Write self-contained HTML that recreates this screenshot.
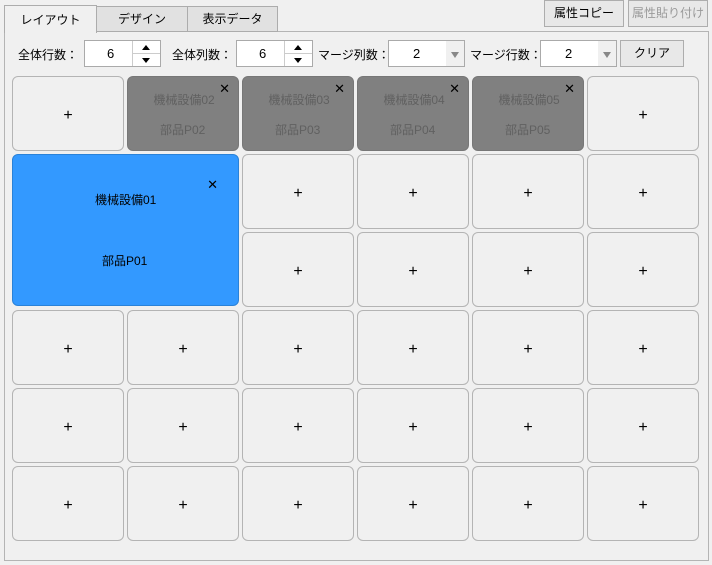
<!DOCTYPE html><html><head><meta charset="utf-8"><style>
*{box-sizing:border-box}
body{margin:0;width:712px;height:565px;background:#f0f0f0;font-family:"Liberation Sans","Noto Sans CJK JP",sans-serif;font-size:12px;color:#000;position:relative;overflow:hidden}
.a{position:absolute}
.tab{position:absolute;border:1px solid #acacac;background:#e1e1e1;text-align:center;line-height:24px}
.btn{position:absolute;border:1px solid #adadad;background:#e8e8e8;text-align:center;line-height:25px}
.cell{position:absolute;width:112px;height:75px;border:1px solid #b4b4b4;border-radius:6px;background:#f0f0f0;text-align:center;line-height:77px;font-size:16px;overflow:hidden}
.g{background:#808080;border-color:#777;color:#606060;font-size:12px;line-height:normal}
.x{position:absolute;right:8px;top:4px;color:#000;font-size:13px}
.in{position:absolute;background:#fff;border:1px solid #aaa;text-align:center;line-height:25px;font-size:13px}
.ar{position:absolute;width:0;height:0;border-left:4px solid transparent;border-right:4px solid transparent}
</style></head><body>
<div class="a" style="left:4px;top:31px;width:705px;height:530px;border:1px solid #b4b4b4"></div>
<div class="tab" style="left:96px;top:6px;width:92px;height:26px">デザイン</div>
<div class="tab" style="left:187px;top:6px;width:91px;height:26px">表示データ</div>
<div class="tab" style="left:4px;top:5px;width:93px;height:28px;background:#f0f0f0;border-bottom:none;line-height:28px">レイアウト</div>
<div class="btn" style="left:544px;top:0;width:80px;height:27px">属性コピー</div>
<div class="btn" style="left:628px;top:0;width:80px;height:27px;color:#9a9a9a">属性貼り付け</div>
<div class="a" style="left:18px;top:46px">全体行数：</div>
<div class="in" style="left:84px;top:40px;width:77px;height:27px;text-align:left;padding-left:22px">6</div>
<div class="a" style="left:132px;top:41px;width:1px;height:25px;background:#ccc"></div>
<div class="a" style="left:133px;top:53px;width:27px;height:1px;background:#ccc"></div>
<div class="ar" style="left:142px;top:45px;border-bottom:5px solid #000"></div><div class="ar" style="left:142px;top:58px;border-top:5px solid #000"></div>
<div class="a" style="left:172px;top:46px">全体列数：</div>
<div class="in" style="left:236px;top:40px;width:77px;height:27px;text-align:left;padding-left:22px">6</div>
<div class="a" style="left:284px;top:41px;width:1px;height:25px;background:#ccc"></div>
<div class="a" style="left:285px;top:53px;width:27px;height:1px;background:#ccc"></div>
<div class="ar" style="left:294px;top:45px;border-bottom:5px solid #000"></div><div class="ar" style="left:294px;top:58px;border-top:5px solid #000"></div>
<div class="a" style="left:318px;top:46px">マージ列数：</div>
<div class="in" style="left:388px;top:40px;width:77px;height:27px;text-align:left;padding-left:24px;background:linear-gradient(90deg,#fff 57px,#f0f0f0 57px)">2<span class="ar" style="left:62px;top:11px;border-top:6px solid #888"></span></div>
<div class="a" style="left:470px;top:46px">マージ行数：</div>
<div class="in" style="left:540px;top:40px;width:77px;height:27px;text-align:left;padding-left:24px;background:linear-gradient(90deg,#fff 57px,#f0f0f0 57px)">2<span class="ar" style="left:62px;top:11px;border-top:6px solid #888"></span></div>
<div class="btn" style="left:620px;top:40px;width:64px;height:27px">クリア</div>
<div id="g"></div>
<script>
var h='',X=[12,127,242,357,472,587],Y=[76,154,232,310,388,466];
for(var r=0;r<6;r++)for(var c=0;c<6;c++){
 if((r==1||r==2)&&c<2)continue;
 if(r==0&&c>=1&&c<=4){h+='<div class="cell g" style="left:'+X[c]+'px;top:'+Y[r]+'px"><div style="position:absolute;left:24px;top:14px;width:64px;overflow:hidden;white-space:nowrap">機械設備0'+(c+1)+'</div><div style="position:absolute;left:32px;top:44px">部品P0'+(c+1)+'</div><span class="x">✕</span></div>';continue}
 h+='<div class="cell" style="left:'+X[c]+'px;top:'+Y[r]+'px">+</div>';}
h+='<div class="cell" style="left:12px;top:154px;width:227px;height:152px;background:#3399ff;border-color:#2a82d8;font-size:12px;line-height:normal"><div style="position:absolute;left:82px;top:36px">機械設備01</div><div style="position:absolute;left:89px;top:97px">部品P01</div><span class="x" style="right:20px;top:22px">✕</span></div>';
document.getElementById('g').innerHTML=h;
</script>
</body></html>
